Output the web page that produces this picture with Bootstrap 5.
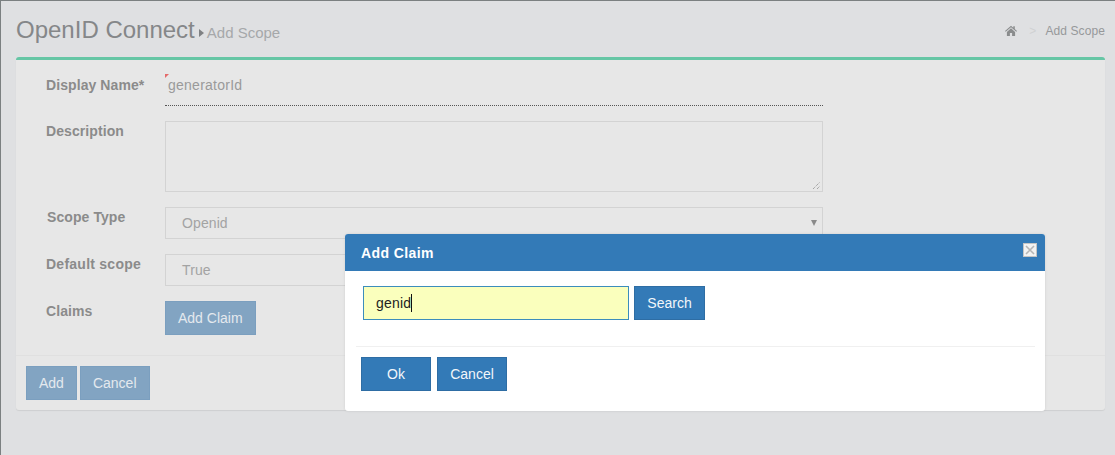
<!DOCTYPE html>
<html lang="en">
<head>
<meta charset="utf-8">
<title>Add Scope</title>
<link rel="stylesheet" href="https://cdn.jsdelivr.net/npm/bootstrap@5.3.0/dist/css/bootstrap.min.css">
<style>
html,body{height:100%;margin:0;overflow:hidden}
body{font-family:"Liberation Sans",Arial,sans-serif;font-size:14px;background:#dfe0e2;color:#8a8a8a;border-top:1px solid #7b8081;border-left:1px solid #7b8081;}
.pg-head{height:56px;padding:14px 10px 0 15px}
.pg-title{font-size:24px;line-height:30px;font-weight:400;color:#858789;margin:0}
.pg-sub{font-size:15px;color:#a6a8aa;letter-spacing:0}
.pg-caret{display:inline-block;border-left:5px solid #7f8183;border-top:4px solid transparent;border-bottom:4px solid transparent;margin:0 3px 0 4px;vertical-align:1px}
.crumbs{font-size:12px;color:#96989a;padding-top:7px;letter-spacing:.1px}
.crumb-icon{margin-top:3px}
.crumb-sep{color:#cfd1d2;margin:0 9px 0 12px}
.shell{margin:0 10px 0 15px;height:353px;background:#e7e7e7;border:0;border-top:3px solid #66c6a5;border-radius:3px;box-shadow:0 1px 1px rgba(0,0,0,.08)}
.form-zone{height:296px;padding:10px 0 0 30px;border-bottom:1px solid #e0e0e0}
.f-row{margin-bottom:15px}
.f-label{width:119px;font-weight:700;letter-spacing:.08px;color:#8b8b8b;line-height:20px}
.f-label-first{padding-top:5px}
.f-label-nudge{padding-left:1px}
.f-label-wide{letter-spacing:.25px}
.f-val{width:658px}
.ro-line{height:36px;border-bottom:1px dotted #555;color:#9a9a9a;padding:5px 0 0 3px;position:relative;line-height:20px;letter-spacing:.25px}
.ro-line::before{content:"";position:absolute;left:0;top:4px;border-top:4px solid #e46a6a;border-right:4px solid transparent}
.ghost-area{height:71px;border:1px solid #d3d3d3;position:relative}
.ghost-area svg{position:absolute;right:1px;bottom:1px}
.ghost-sel{height:32px;border:1px solid #d3d3d3;padding:6px 0 0 16px;line-height:19px;color:#a3a3a3;position:relative;letter-spacing:.1px}
.ghost-sel::after{content:"";position:absolute;right:5px;top:12px;border-top:6px solid #8a8a8a;border-left:3px solid transparent;border-right:3px solid transparent}
.btn-dim{background:#82a4c2;border:1px solid #7b9fbf;color:#e4e9ee;border-radius:0;font-size:14px;line-height:20px;padding:6px 12px;height:34px}
.foot-zone{padding:10px 10px 0 10px;gap:3px}
.dlg{position:absolute;left:345px;top:234px;width:700px;z-index:5;border:0;border-radius:3px;background:#fff;height:177px;box-shadow:0 0 3px rgba(0,0,0,.1)}
.dlg .modal-header{background:#337ab7;color:#fff;height:37px;flex:none;padding:0 16px;border:0;border-radius:3px 3px 0 0}
.dlg-title{font-size:14px;font-weight:700;letter-spacing:.4px;line-height:36px;margin:0}
.dlg-x{width:14px;height:14px;background:#f2f2f2;border:1px solid #c4c4c4;padding:0;display:flex;align-items:center;justify-content:center;margin-top:-5px;margin-right:-8px}
.dlg .modal-body{padding:15px 18px 0 18px;height:75px;flex:none;gap:5px}
.dlg-input{width:266px;height:34px;background:#faffbd;border:1px solid #3c8dbc;padding:0 12px;font-size:14px;color:#222;line-height:32px;letter-spacing:.2px}
.dlg-caret{display:inline-block;width:1px;height:18px;background:#111;vertical-align:-4px}
.btn-solid{background:#337ab7;border:1px solid #2e6da4;color:#f2f6fa;border-radius:0;font-size:14px;line-height:20px;padding:6px 0;height:34px;width:71px}
.dlg .btn-w{width:70px}
.dlg .modal-footer{display:flex;justify-content:flex-start;gap:6px;margin:0 10px 0 11px;padding:10px 5px 0;border-top:1px solid #f0f0f0}
.dlg .modal-footer>*{margin:0}
</style>
</head>
<body>
<header class="pg-head d-flex justify-content-between">
  <h1 class="pg-title">OpenID Connect<span class="pg-caret"></span><span class="pg-sub">Add Scope</span></h1>
  <div class="crumbs d-flex align-items-start">
    <svg width="12" height="11" viewBox="0 0 12 11" class="crumb-icon" aria-hidden="true"><path fill="#8a8c8d" d="M6 .8 0 6l.7.8L6 2.2l5.3 4.6L12 6 9.8 4.1V1.2H8.3v1.6zM1.9 6.9V11h3V8h2.2v3h3V6.9L6 3.3z"/></svg>
    <span class="crumb-sep">&gt;</span><span>Add Scope</span>
  </div>
</header>
<main class="shell">
  <div class="form-zone">
    <div class="d-flex f-row"><div class="f-label f-label-first">Display Name*</div><div class="f-val"><div class="ro-line">generatorId</div></div></div>
    <div class="d-flex f-row"><div class="f-label">Description</div><div class="f-val"><div class="ghost-area"><svg width="9" height="9" viewBox="0 0 9 9" aria-hidden="true"><path stroke="#8a8a8a" stroke-dasharray="1 1" d="M1 8 8 1M5 8l3-3"/></svg></div></div></div>
    <div class="d-flex f-row"><div class="f-label f-label-nudge">Scope Type</div><div class="f-val"><div class="ghost-sel">Openid</div></div></div>
    <div class="d-flex f-row"><div class="f-label f-label-wide">Default scope</div><div class="f-val"><div class="ghost-sel">True</div></div></div>
    <div class="d-flex f-row"><div class="f-label">Claims</div><div class="f-val"><button type="button" class="btn btn-dim">Add Claim</button></div></div>
  </div>
  <div class="foot-zone d-flex">
    <button type="button" class="btn btn-dim">Add</button>
    <button type="button" class="btn btn-dim">Cancel</button>
  </div>
</main>
<section class="dlg modal-content">
  <div class="modal-header d-flex justify-content-between align-items-center">
    <h2 class="dlg-title">Add Claim</h2>
    <button type="button" class="dlg-x" aria-label="Close"><svg width="10" height="10" viewBox="0 0 10 10" aria-hidden="true"><path stroke="#b5b5b5" stroke-width="1.6" d="M1 1l8 8M9 1l-8 8"/></svg></button>
  </div>
  <div class="modal-body d-flex align-items-start">
    <div class="dlg-input">genid<span class="dlg-caret"></span></div>
    <button type="button" class="btn btn-solid">Search</button>
  </div>
  <div class="modal-footer">
    <button type="button" class="btn btn-solid btn-w">Ok</button>
    <button type="button" class="btn btn-solid btn-w">Cancel</button>
  </div>
</section>
<script src="https://cdn.jsdelivr.net/npm/bootstrap@5.3.0/dist/js/bootstrap.bundle.min.js"></script>
</body>
</html>
